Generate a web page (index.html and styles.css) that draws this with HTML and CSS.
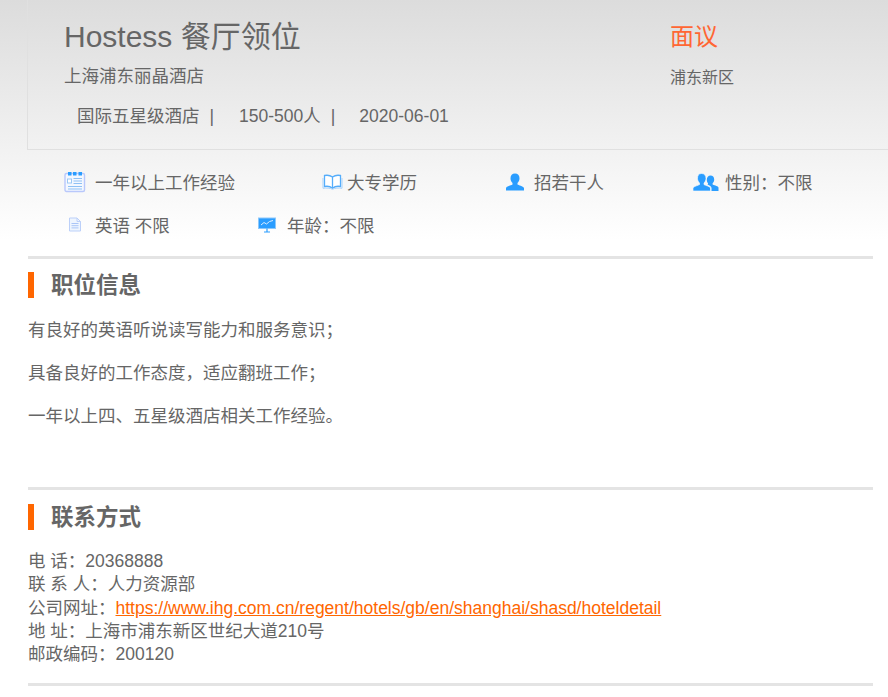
FILE: index.html
```html
<!DOCTYPE html>
<html lang="zh-CN">
<head>
<meta charset="utf-8">
<title>Hostess 餐厅领位</title>
<link rel="stylesheet" href="styles.css">
</head>
<body>
<main class="page">
  <header class="head">
    <div class="head-main">
      <div class="title-col">
        <h1 class="title">Hostess 餐厅领位</h1>
        <p class="company">上海浦东丽晶酒店</p>
        <p class="meta"><span>国际五星级酒店</span><span class="sep">|</span><span class="m2">150-500人</span><span class="sep">|</span><span class="m3">2020-06-01</span></p>
      </div>
      <div class="pay-col">
        <div class="pay">面议</div>
        <p class="area">浦东新区</p>
      </div>
    </div>
  </header>

  <section class="reqs">
    <div class="req-row">
      <div class="req r1">
        <svg class="ico" width="22" height="22" viewBox="0 0 22 22"><rect x="1" y="2.500" width="19.500" height="18" rx="1.500" fill="#f4f8ff" stroke="#b9c8fb" stroke-width="1.400"/><rect x="4" y="1" width="3.500" height="3.500" fill="#2a9dff"/><rect x="9" y="1" width="3.500" height="3.500" fill="#2a9dff"/><rect x="14.500" y="1" width="3.500" height="3.500" fill="#2a9dff"/><rect x="3.500" y="8" width="4" height="4" fill="#fff" stroke="#9cc8f5"/><path d="M9.500 7.500h8.500M9.500 10h8.500M9.500 12.500h8.500M4 15.500h14M4 18h14" stroke="#8fc1f5" stroke-width="1"/></svg>
        <span>一年以上工作经验</span>
      </div>
      <div class="req r2">
        <svg class="ico-book" width="21" height="16" viewBox="0 0 21 16"><path d="M10.500 3C8.500 1.500 5 1 2.500 1.500V12.500C5 12 8.500 12.500 10.500 14.200C12.500 12.500 16 12 18.500 12.500V1.500C16 1 12.500 1.500 10.500 3ZM10.500 3V14.200" fill="#fff" stroke="#55adfb" stroke-width="1.300"/><path d="M1 4V14.300C4.500 13.800 8 14 10.500 15.300C13 14 16.500 13.800 20 14.300V4" fill="none" stroke="#a9d3fb" stroke-width="1"/></svg>
        <span>大专学历</span>
      </div>
      <div class="req r3">
        <svg class="ico-user" width="20" height="18" viewBox="0 0 20 18"><path d="M10 .5c2.800 0 4.500 2 4.500 4.800 0 2-.8 3.700-2 4.700v1.600c1 .8 5.500 1.500 6.500 3.400v2.500H1v-2.500c1-1.900 5.500-2.600 6.500-3.400V10c-1.200-1-2-2.700-2-4.700C5.500 2.500 7.200.5 10 .5Z" fill="#2a9dff"/></svg>
        <span>招若干人</span>
      </div>
      <div class="req r4">
        <svg class="ico-users" width="26" height="18" viewBox="0 0 26 18"><path d="M17.500 2.500c2.200 0 3.700 1.600 3.700 3.900 0 1.600-.6 3-1.600 3.800v1.400c.8.600 4.900 1.200 5.900 2.900V18h-7v-3c0-1.500-2-2.700-4-3.500 1-.6.500-1 .3-1.500-.7-.9-1-2.200-1-3.500 0-2.300 1.500-4 3.700-4Z" fill="#2a9dff"/><path d="M8.500.5c2.800 0 4.500 2 4.500 4.800 0 2-.8 3.700-2 4.700v1.600c1 .8 5.500 1.500 6.500 3.400V18H0v-3c1-1.900 5.500-2.600 6.500-3.400V10c-1.200-1-2-2.700-2-4.700C4.500 2.500 5.700.5 8.500.5Z" fill="#2a9dff" stroke="#fff" stroke-width=".6"/></svg>
        <span>性别：不限</span>
      </div>
    </div>
    <div class="req-row">
      <div class="req r5">
        <svg class="ico-doc" width="14" height="15" viewBox="0 0 14 15"><path d="M1.500 1h7.500l3.500 3.500V14h-11Z" fill="#eef5fe" stroke="#bcd0f9"/><path d="M9 1v3.500h3.500" fill="none" stroke="#bcd0f9"/><path d="M3.500 6.500h7M3.500 8.700h7M3.500 10.900h7" stroke="#a9c5f7"/></svg>
        <span>英语 不限</span>
      </div>
      <div class="req r6">
        <svg class="ico-board" width="18" height="16" viewBox="0 0 18 16"><rect x=".5" y="1" width="17" height="10.500" fill="#2a9dff" stroke="#8cc8fb"/><path d="M3 8l3-2.500 2.500 1.500 3-2.500L15 3.500" fill="none" stroke="#d7ecff"/><path d="M9 11.500v3M6 15h6" stroke="#2a9dff" stroke-width="1.200"/></svg>
        <span>年龄：不限</span>
      </div>
    </div>
  </section>

  <section class="block info">
    <h2 class="block-title">职位信息</h2>
    <p class="para">有良好的英语听说读写能力和服务意识；</p>
    <p class="para">具备良好的工作态度，适应翻班工作；</p>
    <p class="para">一年以上四、五星级酒店相关工作经验。</p>
  </section>

  <section class="block contact">
    <h2 class="block-title">联系方式</h2>
    <ul class="lines">
      <li>电 话：20368888</li>
      <li>联 系 人：人力资源部</li>
      <li>公司网址：<a href="#">https://www.ihg.com.cn/regent/hotels/gb/en/shanghai/shasd/hoteldetail</a></li>
      <li>地 址：上海市浦东新区世纪大道210号</li>
      <li>邮政编码：200120</li>
    </ul>
  </section>
  <div class="end-rule"></div>
</main>
</body>
</html>
```
FILE: styles.css
```css
* { box-sizing: border-box; }
html, body { margin: 0; padding: 0; }
body {
  height: 697px;
  overflow: hidden;
  background: linear-gradient(#dcdcdc 0, #fff 240px) no-repeat;
  color: #666;
  font-family: "Liberation Sans", "Noto Sans CJK SC", sans-serif;
  font-size: 17.500px;
}
p, h1, h2, ul { margin: 0; padding: 0; }
ul { list-style: none; }
.page { padding: 0 15px 0 28px; }
.head {
  margin: 0 -15px 0 -1px;
  height: 150px;
  border-left: 1px solid #e0e0e0;
  border-bottom: 1px solid #e0e0e0;
}
.head-main { display: flex; padding-left: 36px; }
.title-col { width: 606px; }
.title { font-size: 30px; font-weight: 400; line-height: 36px; padding-top: 19px; color: #666; }
.company { margin-top: 5px; line-height: 32px; }
.meta { margin-top: 8px; padding-left: 13px; line-height: 32px; color: #666; }
.sep { margin-left: 10px; }
.m2 { margin-left: 25px; }
.m3 { margin-left: 24px; }
.pay { font-size: 24px; color: #ff6633; line-height: 36px; padding-top: 19px; }
.area { margin-top: 7px; line-height: 32px; font-size: 16px; }
.reqs { padding-top: 10px; }
.req-row { display: flex; height: 43px; align-items: center; }
.req { display: flex; align-items: center; }
.r1 { margin-left: 36px; width: 258px; }
.r1 .ico { margin-right: 9px; }
.r2 { width: 183px; }
.r2 svg { margin-right: 4px; }
.r3 { width: 188px; }
.r3 svg { margin-right: 9px; }
.r4 svg { margin-right: 6px; }
.r5 { margin-left: 40px; width: 190px; }
.r5 svg { margin-right: 13px; }
.r6 svg { margin-right: 11px; }
.block { border-top: 3px solid #e4e4e4; }
.info { margin-top: 10px; height: 231px; }
.block-title {
  margin-top: 13px;
  height: 26px;
  line-height: 28px;
  border-left: 6px solid #ff6600;
  padding-left: 17px;
  font-size: 22.500px;
  font-weight: 700;
  color: #666;
}
.para { margin-top: 17px; line-height: 26px; }
.info .block-title + .para { margin-top: 19px; }
.contact { height: 196px; }
.contact .block-title { margin-top: 14px; }
.lines { margin-top: 20px; line-height: 23.250px; }
.lines a { color: #ff6600; text-decoration: underline; }
.end-rule { height: 3px; background: #e4e4e4; }
```
